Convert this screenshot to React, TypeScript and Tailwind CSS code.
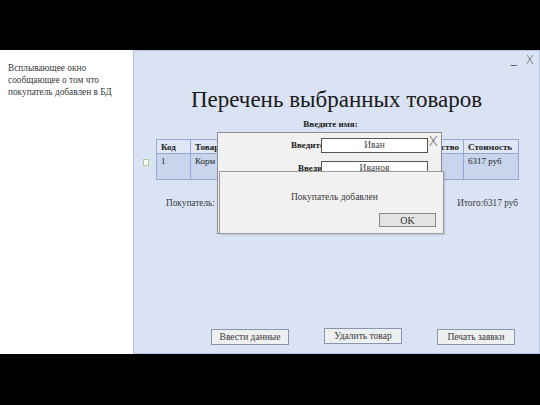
import React from "react";

const serif = "font-['Liberation_Serif','Times_New_Roman',serif]";

function Btn({ label, className = "" }: { label: string; className?: string }) {
  return (
    <div
      className={`w-[78px] h-[16px] bg-[#eeeff1] border border-[#8795ad] flex items-center justify-center text-[9.5px] text-[#3a3a3a] ${className}`}
    >
      {label}
    </div>
  );
}

export default function App() {
  const cols = "grid grid-cols-[34px_101px_110px_62px_55px]";
  const cell = "border-l border-t border-[#93a9d4] px-[4px] text-[9px] leading-[12px] text-[#222]";
  return (
    <div className={`w-[540px] h-[405px] bg-black flex flex-col ${serif}`}>
      <div className="h-[50px]" />
      <div className="h-[304px] flex">
        <div className="w-[133px] bg-white pl-[8px] pt-[12px] text-[9.3px] leading-[12px] text-[#3a3a3a]">
          Всплывающее окно
          <br />
          сообщающее о том что
          <br />
          покупатель добавлен в БД
        </div>
        <div className="flex-1 bg-[#dae3f3] border border-[#b4c5e4] relative flex flex-col">
          <div className="h-[18px] flex justify-end items-start pr-[5px] pt-[2px] gap-[9px] font-['DejaVu_Sans',sans-serif] font-extralight text-[12px] leading-[14px] text-[#555]">
            <span className="-mt-[1px] font-normal">_</span>
            <span>X</span>
          </div>
          <div className="mt-[17px] text-center text-[23px] leading-[28px] text-[#1a1a1a]">
            Перечень выбранных товаров
          </div>
          <div className="mt-[4px] text-center pr-[12px] text-[9px] leading-[12px] font-bold text-[#222]">
            Введите имя:
          </div>
          <div className="mt-[9px] flex items-start pl-[9px]">
            <div className="mt-[20px] w-[6px] h-[7px] border border-[#a9d18e] bg-[#f4fbef]" />
            <div className="ml-[7px] border-r border-b border-[#93a9d4]">
              <div className={`${cols} h-[14px] bg-[#dfe6f4] font-bold`}>
                <div className={`${cell} pt-[1px]`}>Код</div>
                <div className={`${cell} pt-[1px]`}>Товар</div>
                <div className={`${cell} pt-[1px]`}>Цена</div>
                <div className={`${cell} pt-[1px] text-right`}>Количество</div>
                <div className={`${cell} pt-[1px]`}>Стоимость</div>
              </div>
              <div className={`${cols} h-[26px] bg-[#c9d5ed]`}>
                <div className={`${cell} pt-[1px]`}>1</div>
                <div className={`${cell} pt-[1px]`}>Корм Royal</div>
                <div className={`${cell} pt-[1px]`}>6317 руб</div>
                <div className={`${cell} pt-[1px]`}>1</div>
                <div className={`${cell} pt-[1px]`}>6317 руб</div>
              </div>
            </div>
          </div>
          <div className="mt-[17px] flex justify-between pl-[32px] pr-[21px] text-[9.3px] leading-[12px] text-[#3a3a3a]">
            <span>Покупатель:</span>
            <span>Итого:6317 руб</span>
          </div>
          <div className="mt-auto mb-[8px] flex items-start pl-[77px] gap-[35px]">
            <Btn label="Ввести данные" className="mt-[1px]" />
            <Btn label="Удалить товар" />
            <Btn label="Печать заявки" className="mt-[1px]" />
          </div>

          {/* Dialog 1: name entry */}
          <div className="absolute left-[83px] top-[81px] w-[225px] h-[102px] bg-[#f1f1f1] border border-[#8c8c8c]">
            <div className="absolute right-[3px] top-[1px] font-['DejaVu_Sans',sans-serif] font-extralight text-[14px] leading-[14px] text-[#555]">
              X
            </div>
            <div className="flex items-center mt-[5px] pl-[73px]">
              <div className="w-[30px] overflow-hidden whitespace-nowrap text-[9px] font-bold text-[#222]">
                Введите имя:
              </div>
              <div className="w-[107px] h-[15px] bg-white border border-[#555] flex items-center justify-center text-[9.5px] text-[#444]">
                Иван
              </div>
            </div>
            <div className="flex items-center mt-[8px] pl-[80px]">
              <div className="w-[23px] overflow-hidden whitespace-nowrap text-[9px] font-bold text-[#222]">
                Введите фамилию:
              </div>
              <div className="w-[107px] h-[15px] bg-white border border-[#555] flex items-center justify-center text-[9.5px] text-[#444]">
                Иванов
              </div>
            </div>
          </div>

          {/* Dialog 2: message */}
          <div className="absolute left-[85px] top-[120px] w-[225px] h-[63px] bg-[#f1f1f1] border border-[#9a9a9a] shadow-[1px_1px_2px_rgba(0,0,0,0.15)]">
            <div className="pl-[71px] pt-[19px] text-[9.5px] leading-[12px] text-[#3a3a3a]">
              Покупатель добавлен
            </div>
            <div className="ml-[159px] mt-[10px] w-[57px] h-[14px] bg-[#e3e3e3] border border-[#8a8a8a] flex items-center justify-center text-[10px] text-[#333]">
              OK
            </div>
          </div>
        </div>
      </div>
      <div className="flex-1" />
    </div>
  );
}
